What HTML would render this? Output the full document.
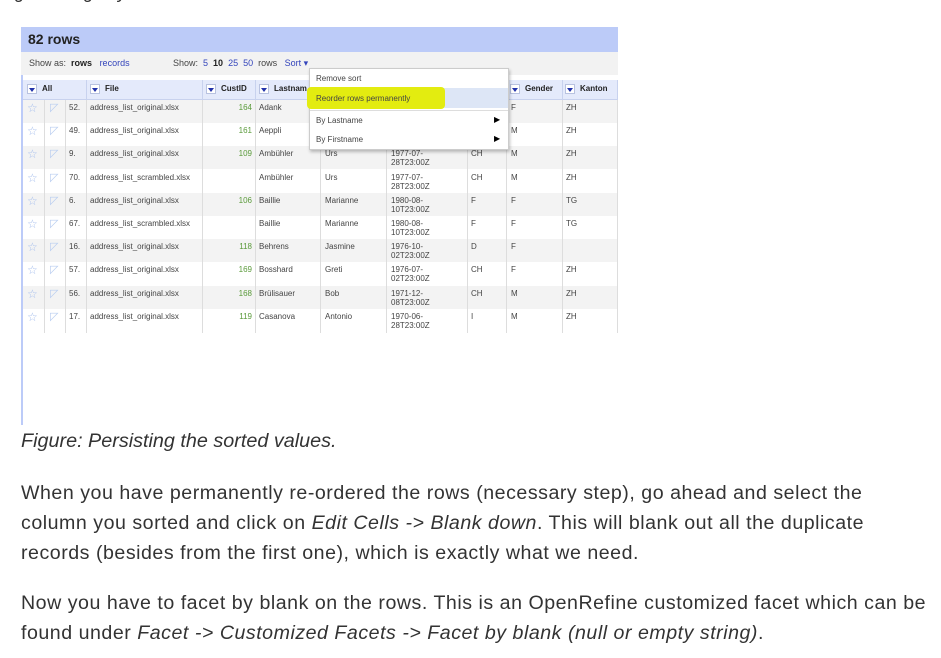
<!DOCTYPE html>
<html><head><meta charset="utf-8"><style>
*{margin:0;padding:0;box-sizing:border-box}
body{width:941px;height:658px;background:#fff;position:relative;overflow:hidden;font-family:"Liberation Sans",sans-serif}
.a{position:absolute;white-space:nowrap}
.t{font-size:8px;color:#444}
.g{color:#5a9a3a}
.tri{display:inline-block;width:10px;height:10px;background:#fff;border:1px solid #b8c2e0;position:relative;vertical-align:middle;margin-right:5px}
.tri:after{content:"";position:absolute;left:1px;top:3px;border-left:3px solid transparent;border-right:3px solid transparent;border-top:4px solid #2233aa}
.p{font-size:19.6px;letter-spacing:0.52px;color:#333;left:21px;line-height:30px}
.vl{position:absolute;top:100px;height:233px;width:1px;background:#ddd}
.hl{position:absolute;top:80px;height:20px;width:1px;background:#c8d2ee}
</style></head><body>
<div class="a" style="left:0;top:-18px;font-size:18px;color:#333;font-style:italic">Figure: Registry</div>
<div class="a" style="left:21px;top:27px;width:597px;height:25px;background:#bccbf8"></div>
<div class="a" style="left:28px;top:31px;font-size:14px;font-weight:bold;color:#222">82 rows</div>
<div class="a" style="left:21px;top:52px;width:597px;height:23px;background:#f2f2f2"></div>
<div class="a t" style="left:29px;top:58px;font-size:9px">Show as: &nbsp;<b style="color:#222">rows</b> &nbsp; <span style="color:#3344bb">records</span></div>
<div class="a t" style="left:173px;top:58px;font-size:9px">Show: &nbsp;<span style="color:#3344bb">5</span> &nbsp;<b style="color:#222">10</b> &nbsp;<span style="color:#3344bb">25</span> &nbsp;<span style="color:#3344bb">50</span> &nbsp;rows &nbsp; <span style="color:#3344bb">Sort ▾</span></div>
<div class="a" style="left:21px;top:75px;width:2px;height:350px;background:#bccbf8"></div>
<div class="a" style="left:23px;top:80px;width:595px;height:20px;background:#e4eafb;border-bottom:1px solid #c8d2ee"></div>
<div class="hl" style="left:86px"></div><div class="hl" style="left:202px"></div><div class="hl" style="left:255px"></div><div class="hl" style="left:506px"></div><div class="hl" style="left:562px"></div><div class="hl" style="left:617px"></div>
<div class="a t" style="left:27px;top:84px;font-weight:bold;color:#222"><span class="tri"></span>All</div>
<div class="a t" style="left:90px;top:84px;font-weight:bold;color:#222"><span class="tri"></span>File</div>
<div class="a t" style="left:206px;top:84px;font-weight:bold;color:#222"><span class="tri"></span>CustID</div>
<div class="a t" style="left:259px;top:84px;font-weight:bold;color:#222"><span class="tri"></span>Lastnam</div>
<div class="a t" style="left:510px;top:84px;font-weight:bold;color:#222"><span class="tri"></span>Gender</div>
<div class="a t" style="left:565px;top:84px;font-weight:bold;color:#222"><span class="tri"></span>Kanton</div>
<div id="rows"></div>
<div class="vl" style="left:44px"></div><div class="vl" style="left:65px"></div><div class="vl" style="left:86px"></div><div class="vl" style="left:202px"></div><div class="vl" style="left:255px"></div><div class="vl" style="left:320px"></div><div class="vl" style="left:386px"></div><div class="vl" style="left:467px"></div><div class="vl" style="left:506px"></div><div class="vl" style="left:562px"></div><div class="vl" style="left:617px"></div>
<div class="a" style="left:309px;top:68px;width:200px;height:82px;background:#fff;border:1px solid #ccc;box-shadow:1px 2px 3px rgba(0,0,0,.25)"></div>
<div class="a" style="left:310px;top:88px;width:198px;height:20px;background:#dde6f6"></div>
<div class="a" style="left:307px;top:87px;width:138px;height:22px;background:#e3ec10;border-radius:4px"></div>
<div class="a t" style="left:316px;top:74px">Remove sort</div>
<div class="a t" style="left:316px;top:94px">Reorder rows permanently</div>
<div class="a" style="left:310px;top:110px;width:198px;height:1px;background:#ddd"></div>
<div class="a t" style="left:316px;top:116px">By Lastname</div><div class="a" style="left:494px;top:115px;font-size:8px">▶</div>
<div class="a t" style="left:316px;top:135px">By Firstname</div><div class="a" style="left:494px;top:134px;font-size:8px">▶</div>
<div class="a" style="left:21px;top:430px;font-size:19.8px;color:#333;font-style:italic">Figure: Persisting the sorted values.</div>
<div class="a p" style="top:478px">When you have permanently re-ordered the rows (necessary step), go ahead and select the</div>
<div class="a p" style="top:508px">column you sorted and click on <i>Edit Cells -&gt; Blank down</i>. This will blank out all the duplicate</div>
<div class="a p" style="top:538px">records (besides from the first one), which is exactly what we need.</div>
<div class="a p" style="top:588px">Now you have to facet by blank on the rows. This is an OpenRefine customized facet which can be</div>
<div class="a p" style="top:618px">found under <i>Facet -&gt; Customized Facets -&gt; Facet by blank (null or empty string)</i>.</div>
<script>
var d=[["52","address_list_original.xlsx","164","Adank","","","","F","ZH"],
["49","address_list_original.xlsx","161","Aeppli","","","","M","ZH"],
["9","address_list_original.xlsx","109","Ambühler","Urs","1977-07-|28T23:00Z","CH","M","ZH"],
["70","address_list_scrambled.xlsx","","Ambühler","Urs","1977-07-|28T23:00Z","CH","M","ZH"],
["6","address_list_original.xlsx","106","Baillie","Marianne","1980-08-|10T23:00Z","F","F","TG"],
["67","address_list_scrambled.xlsx","","Baillie","Marianne","1980-08-|10T23:00Z","F","F","TG"],
["16","address_list_original.xlsx","118","Behrens","Jasmine","1976-10-|02T23:00Z","D","F",""],
["57","address_list_original.xlsx","169","Bosshard","Greti","1976-07-|02T23:00Z","CH","F","ZH"],
["56","address_list_original.xlsx","168","Brülisauer","Bob","1971-12-|08T23:00Z","CH","M","ZH"],
["17","address_list_original.xlsx","119","Casanova","Antonio","1970-06-|28T23:00Z","I","M","ZH"]];
var h="";
d.forEach(function(r,i){var y=100+i*23.2;
h+='<div class="a" style="left:23px;top:'+y+'px;width:595px;height:23px;background:'+(i%2?'#fff':'#f3f3f3')+'"></div>';
h+='<div class="a" style="left:27px;top:'+(y+1)+'px;font-size:12px;color:#a8c0ee">☆</div>';
h+='<div class="a" style="left:50px;top:'+(y+1)+'px;font-size:11px;color:#b8cdf0">◸</div>';
h+='<div class="a t" style="left:69px;top:'+(y+3)+'px">'+r[0]+'.</div>';
h+='<div class="a t" style="left:90px;top:'+(y+3)+'px">'+r[1]+'</div>';
h+='<div class="a t g" style="left:202px;width:50px;text-align:right;top:'+(y+3)+'px">'+r[2]+'</div>';
h+='<div class="a t" style="left:259px;top:'+(y+3)+'px">'+r[3]+'</div>';
h+='<div class="a t" style="left:325px;top:'+(y+3)+'px">'+r[4]+'</div>';
h+='<div class="a t" style="left:391px;top:'+(y+3)+'px;line-height:9px">'+r[5].replace('|','<br>')+'</div>';
h+='<div class="a t" style="left:471px;top:'+(y+3)+'px">'+r[6]+'</div>';
h+='<div class="a t" style="left:511px;top:'+(y+3)+'px">'+r[7]+'</div>';
h+='<div class="a t" style="left:566px;top:'+(y+3)+'px">'+r[8]+'</div>';});
document.getElementById("rows").innerHTML=h;
</script>
</body></html>
